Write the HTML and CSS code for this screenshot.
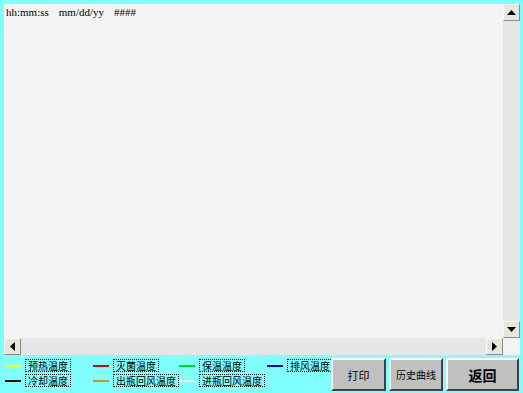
FILE: index.html
```html
<!DOCTYPE html>
<html>
<head>
<meta charset="utf-8">
<link rel="stylesheet" href="styles.css">
</head>
<body>
<div class="screen">
  <div class="chart">
    <div class="plot">
      <div class="stamp"><span>hh:mm:ss</span><span>mm/dd/yy</span><span>####</span></div>
    </div>
    <div class="vbar">
      <div class="sbtn"><svg width="9" height="5" viewBox="0 0 9 5"><path d="M4.5 0 L9 5 L0 5 Z" fill="#000"/></svg></div>
      <div class="track"></div>
      <div class="sbtn"><svg width="9" height="5" viewBox="0 0 9 5"><path d="M0 0 L9 0 L4.5 5 Z" fill="#000"/></svg></div>
    </div>
    <div class="hbar">
      <div class="sbtn"><svg width="5" height="9" viewBox="0 0 5 9"><path d="M5 0 L5 9 L0 4.5 Z" fill="#000"/></svg></div>
      <div class="track"></div>
      <div class="sbtn"><svg width="5" height="9" viewBox="0 0 5 9"><path d="M0 0 L5 4.5 L0 9 Z" fill="#000"/></svg></div>
    </div>
    <div class="corner"></div>
  </div>
  <div class="panel">
    <div class="legend">
      <div class="item"><i class="sw yellow"></i><span class="lbl">预热温度</span></div>
      <div class="item"><i class="sw red"></i><span class="lbl">灭菌温度</span></div>
      <div class="item"><i class="sw green"></i><span class="lbl">保温温度</span></div>
      <div class="item"><i class="sw blue"></i><span class="lbl">排风温度</span></div>
      <div class="item"><i class="sw black"></i><span class="lbl">冷却温度</span></div>
      <div class="item"><i class="sw orange"></i><span class="lbl">出瓶回风温度</span></div>
      <div class="item"><i class="sw white"></i><span class="lbl">进瓶回风温度</span></div>
    </div>
    <div class="buttons">
      <button class="btn b1">打印</button>
      <button class="btn b2">历史曲线</button>
      <button class="btn b3">返回</button>
    </div>
  </div>
</div>
</body>
</html>
```
FILE: styles.css
```css
html, body {
  margin: 0;
  padding: 0;
}
body {
  width: 523px;
  height: 393px;
  overflow: hidden;
  background: #80ffff;
}
.screen {
  width: 523px;
  height: 393px;
  display: flex;
  flex-direction: column;
  box-sizing: border-box;
  padding: 3px 3px 0 3px;
}
.chart {
  height: 351px;
  display: grid;
  grid-template-columns: 1fr 17px;
  grid-template-rows: 1fr 17px;
  background: #f4f4f4;
  border-left: 1px solid #c8dcdc;
  border-top: 1px solid #c8dcdc;
}
.plot {
  background: #f4f4f4;
}
.stamp {
  font-family: "Liberation Serif", serif;
  font-size: 11px;
  color: #000;
  padding: 1px 0 0 2px;
  display: flex;
  gap: 10px;
  line-height: 14px;
}
.vbar {
  display: flex;
  flex-direction: column;
}
.hbar {
  display: flex;
  flex-direction: row;
}
.track {
  flex: 1;
  background: #e6e6e6;
}
.sbtn {
  width: 17px;
  height: 17px;
  flex-shrink: 0;
  box-sizing: border-box;
  background: #e8e6dc;
  border-top: 1px solid #f8f8f4;
  border-left: 1px solid #f8f8f4;
  border-right: 1px solid #8a8a86;
  border-bottom: 1px solid #8a8a86;
  display: flex;
  align-items: center;
  justify-content: center;
}
.corner {
  background: #f4f4f4;
}
.panel {
  flex: 1;
  display: flex;
  align-items: flex-start;
  justify-content: space-between;
  padding: 0 1px 0 2px;
}
.legend {
  display: grid;
  grid-template-columns: 88px 86px 88px 60px;
  row-gap: 2px;
  font-family: "Noto Sans CJK SC", sans-serif;
  font-size: 10px;
  padding-top: 4px;
}
.item {
  display: flex;
  align-items: center;
  height: 13px;
  white-space: nowrap;
}
.sw {
  display: block;
  flex-shrink: 0;
  width: 16px;
  height: 2px;
  margin-right: 4px;
}
.yellow { background: #ffff00; }
.red { background: #e00000; }
.green { background: #00e000; }
.blue { background: #0000e0; }
.black { background: #000; }
.orange { background: #d09020; }
.white { background: #ffffff; }
.lbl {
  border: 1px dotted #000;
  line-height: 11px;
  padding: 0 2px;
  color: #000;
}
.buttons {
  display: flex;
  gap: 3px;
  padding-top: 3px;
}
.btn {
  height: 33px;
  background: #c0c0c0;
  border-top: 2px solid #ffffff;
  border-left: 2px solid #ffffff;
  border-right: 2px solid #404040;
  border-bottom: 2px solid #404040;
  font-family: "Noto Sans CJK SC", sans-serif;
  color: #000;
  padding: 0;
}
.b1 { width: 55px; font-size: 11px; }
.b2 { width: 54px; font-size: 10px; }
.b3 { width: 73px; font-size: 14px; font-weight: bold; }
```
